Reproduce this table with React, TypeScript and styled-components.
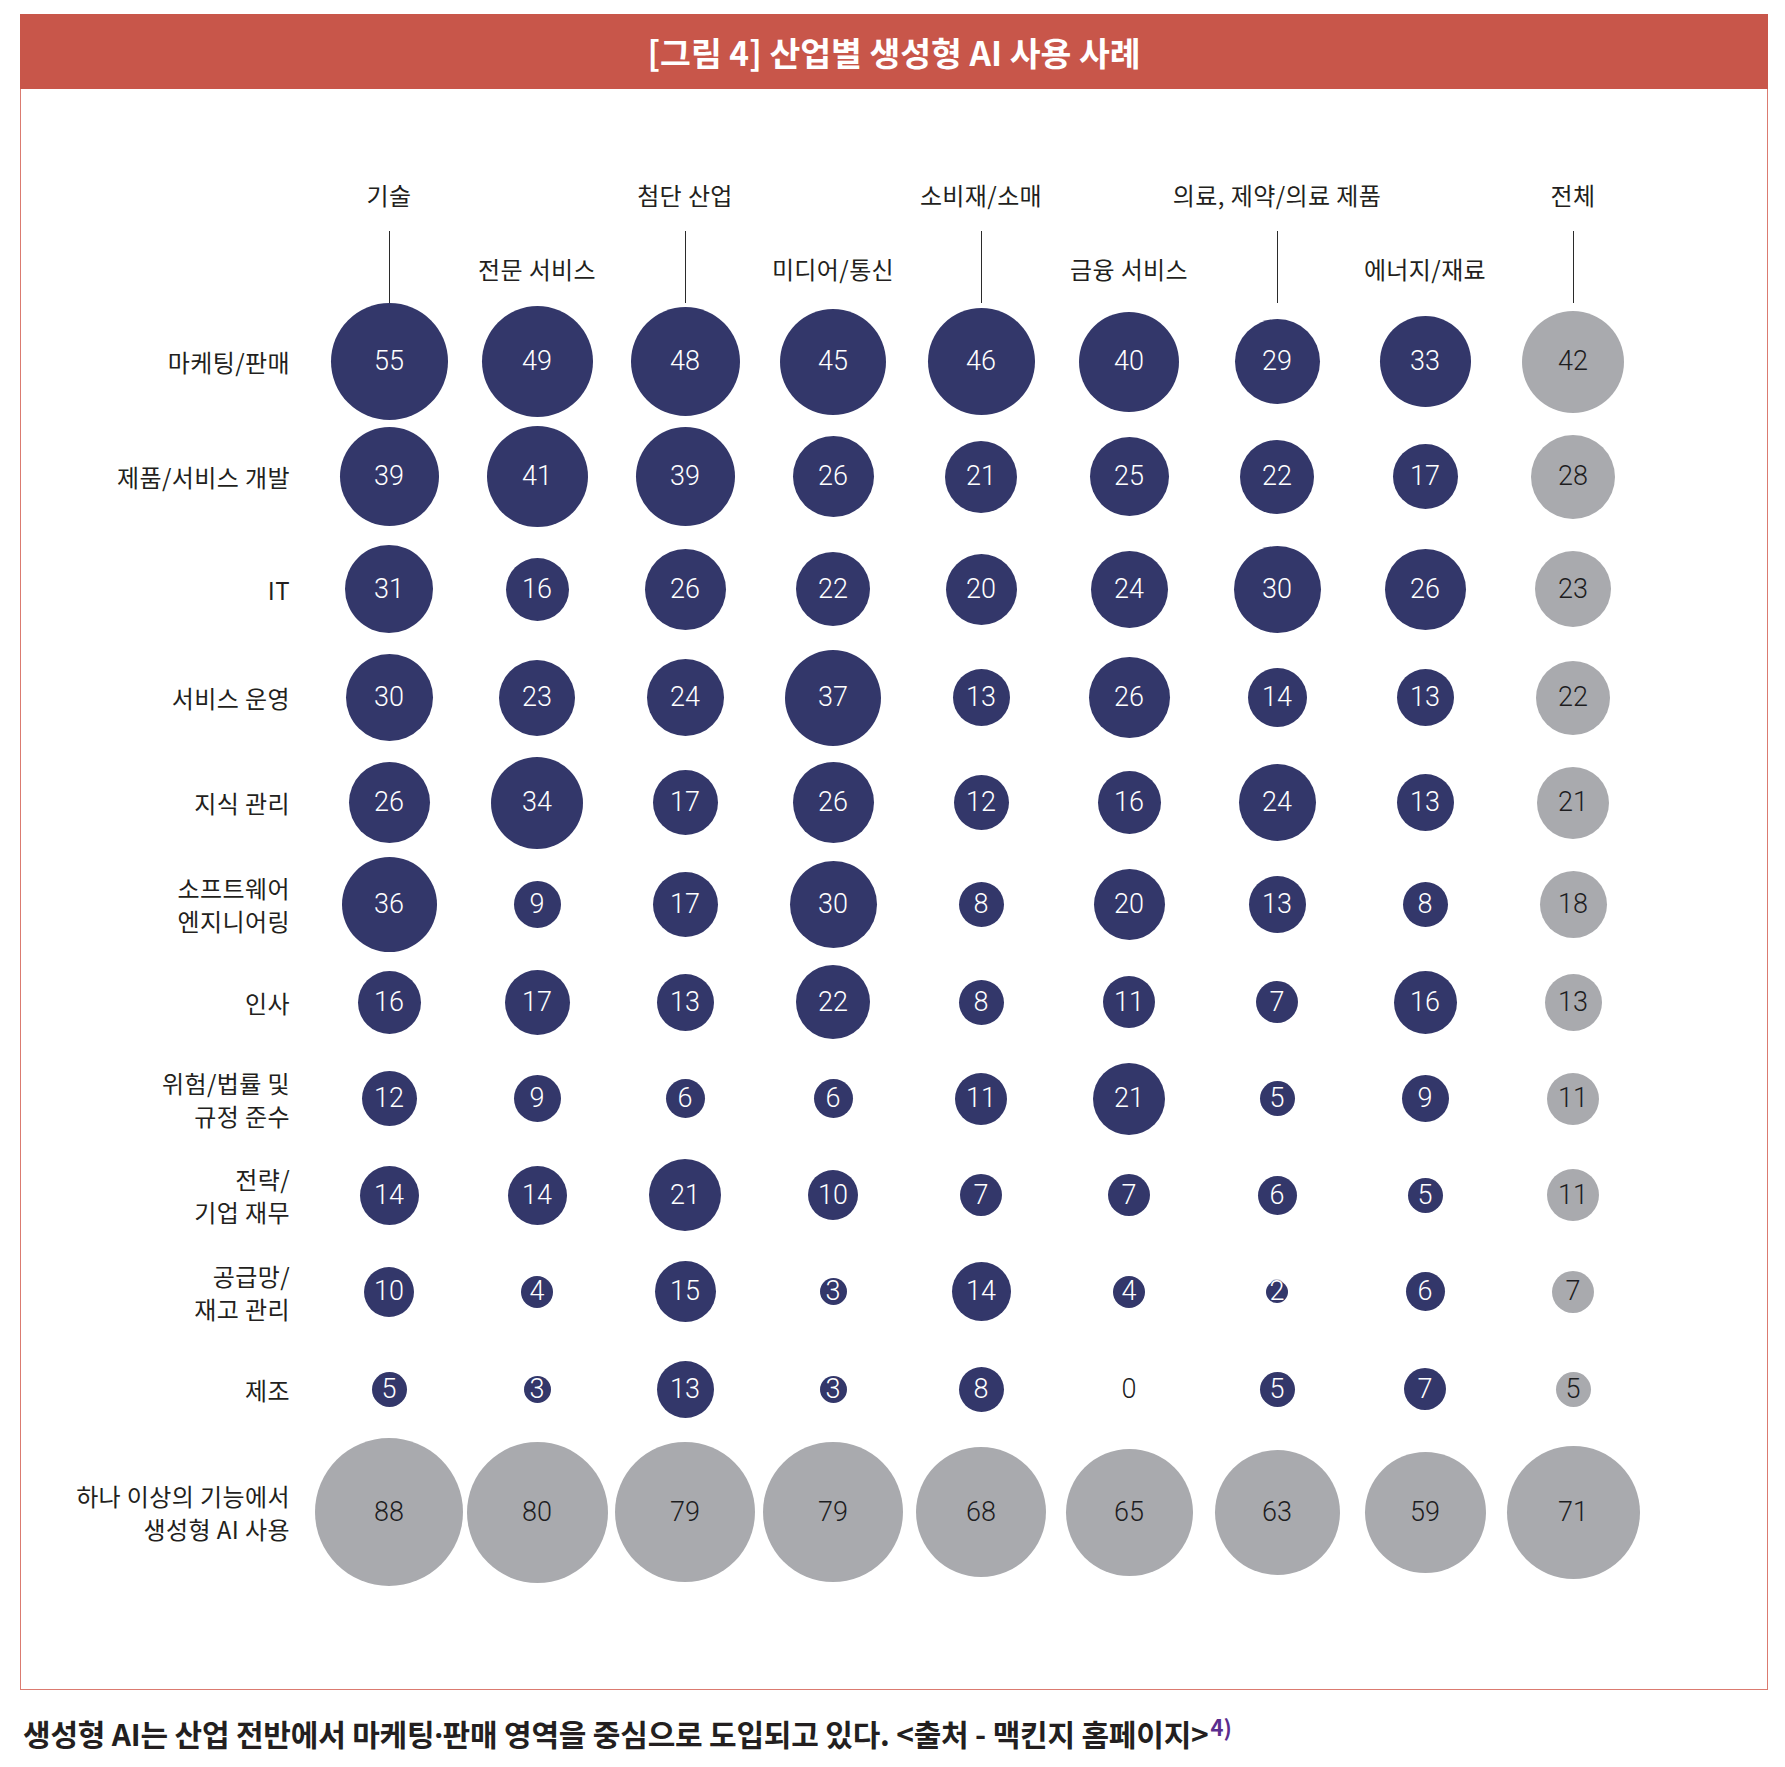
import React from 'react';
import styled, { createGlobalStyle } from 'styled-components';

const NAVY = '#33376a';
const GRAY = '#a9aaae';

const GlobalStyle = createGlobalStyle`
    html, body {
        margin: 0;
        padding: 0;
        background: #ffffff;
    }
    body {
        font-family: "Noto Sans CJK KR", "Noto Sans", sans-serif;
        color: #231f20;
    }
`;

const industries: { name: string; low: boolean }[] = [
    { name: '기술', low: false },
    { name: '전문 서비스', low: true },
    { name: '첨단 산업', low: false },
    { name: '미디어/통신', low: true },
    { name: '소비재/소매', low: false },
    { name: '금융 서비스', low: true },
    { name: '의료, 제약/의료 제품', low: false },
    { name: '에너지/재료', low: true },
    { name: '전체', low: false },
];

const rows: { label: string; values: number[]; height: number; total?: boolean }[] = [
    { label: '마케팅/판매', values: [55, 49, 48, 45, 46, 40, 29, 33, 42], height: 116 },
    { label: '제품/서비스 개발', values: [39, 41, 39, 26, 21, 25, 22, 17, 28], height: 115 },
    { label: 'IT', values: [31, 16, 26, 22, 20, 24, 30, 26, 23], height: 110 },
    { label: '서비스 운영', values: [30, 23, 24, 37, 13, 26, 14, 13, 22], height: 107 },
    { label: '지식 관리', values: [26, 34, 17, 26, 12, 16, 24, 13, 21], height: 103 },
    { label: '소프트웨어\n엔지니어링', values: [36, 9, 17, 30, 8, 20, 13, 8, 18], height: 100 },
    { label: '인사', values: [16, 17, 13, 22, 8, 11, 7, 16, 13], height: 96 },
    { label: '위험/법률 및\n규정 준수', values: [12, 9, 6, 6, 11, 21, 5, 9, 11], height: 97 },
    { label: '전략/\n기업 재무', values: [14, 14, 21, 10, 7, 7, 6, 5, 11], height: 96 },
    { label: '공급망/\n재고 관리', values: [10, 4, 15, 3, 14, 4, 2, 6, 7], height: 97 },
    { label: '제조', values: [5, 3, 13, 3, 8, 0, 5, 7, 5], height: 98 },
    { label: '하나 이상의 기능에서\n생성형 AI 사용', values: [88, 80, 79, 79, 68, 65, 63, 59, 71], height: 143, total: true },
];

/** Bubble diameter grows with the square root of the share. */
const diameter = (v: number) => Math.round(15.8 * Math.sqrt(v));

const App = () => (
    <>
        <GlobalStyle />
        <Page>
            <Figure>
                <TitleBar>[그림 4] 산업별 생성형 AI 사용 사례</TitleBar>
                <Chart>
                    <HeadRow>
                        <div />
                        {industries.map((ind) => (
                            <HeadCell key={ind.name} $low={ind.low}>
                                <HeadLabel>{ind.name}</HeadLabel>
                                {!ind.low && <Stem />}
                            </HeadCell>
                        ))}
                    </HeadRow>
                    {rows.map((row) => (
                        <Row key={row.label} $h={row.height}>
                            <RowLabel>{row.label}</RowLabel>
                            {row.values.map((v, i) => (
                                <Cell key={i}>
                                    {v === 0 ? (
                                        <Bare>0</Bare>
                                    ) : (
                                        <Bubble
                                            $d={diameter(v)}
                                            $gray={row.total || i === industries.length - 1}
                                        >
                                            {v}
                                        </Bubble>
                                    )}
                                </Cell>
                            ))}
                        </Row>
                    ))}
                </Chart>
            </Figure>
            <Caption>
                생성형 AI는 산업 전반에서 마케팅<Dot>·</Dot>판매 영역을 중심으로 도입되고 있다. &lt;출처 - 맥킨지 홈페이지&gt;
                <Note>4)</Note>
            </Caption>
        </Page>
    </>
);

export default App;

const Page = styled.div`
    padding: 14px 17px 0 20px;
`;

const Figure = styled.div`
    width: 1748px;
    box-sizing: border-box;
    border: 1px solid #db7b70;
    border-top: none;
`;

const TitleBar = styled.div`
    height: 75px;
    margin: 0 -1px;
    background: #c8564a;
    color: #ffffff;
    display: flex;
    align-items: center;
    justify-content: center;
    font-size: 33.5px;
    font-weight: 700;
    letter-spacing: 0;
`;

const Chart = styled.div`
    padding-bottom: 108px;
`;

const HeadRow = styled.div`
    display: grid;
    grid-template-columns: 294px repeat(9, 148px);
    height: 214px;
    box-sizing: border-box;
    padding-top: 92px;
`;

const HeadCell = styled.div<{ $low: boolean }>`
    display: flex;
    flex-direction: column;
    align-items: center;
    padding-top: ${(p) => (p.$low ? '74px' : '0')};
`;

const HeadLabel = styled.span`
    font-size: 24px;
    letter-spacing: 0.4px;
    line-height: 28px;
    white-space: nowrap;
`;

const Stem = styled.div`
    width: 1px;
    height: 72px;
    margin-top: 22px;
    background: #2b2b2b;
`;

const Row = styled.div<{ $h: number }>`
    display: grid;
    grid-template-columns: 294px repeat(9, 148px);
    height: ${(p) => p.$h}px;
`;

const RowLabel = styled.div`
    display: flex;
    align-items: center;
    justify-content: flex-end;
    padding-right: 25px;
    text-align: right;
    white-space: pre-line;
    font-size: 24px;
    letter-spacing: 0.4px;
    line-height: 33px;
`;

const Cell = styled.div`
    display: flex;
    align-items: center;
    justify-content: center;
`;

const Bubble = styled.div<{ $d: number; $gray?: boolean }>`
    flex: none;
    width: ${(p) => p.$d}px;
    height: ${(p) => p.$d}px;
    border-radius: 50%;
    background: ${(p) => (p.$gray ? GRAY : NAVY)};
    color: ${(p) => (p.$gray ? '#1d1d1f' : '#ffffff')};
    display: flex;
    align-items: center;
    justify-content: center;
    font-family: Roboto, "Liberation Sans", sans-serif;
    font-weight: 300;
    font-size: 27px;
    line-height: 1;
    text-shadow: ${(p) =>
        !p.$gray && p.$d < 34 ? `0 0 1px ${NAVY}, 0 0 1px ${NAVY}, 0 0 1px ${NAVY}` : 'none'};
`;

const Bare = styled.span`
    font-family: Roboto, "Liberation Sans", sans-serif;
    font-weight: 300;
    font-size: 27px;
    line-height: 1;
    color: #1d1d1f;
`;

const Caption = styled.div`
    margin-top: 25px;
    padding-left: 3px;
    font-size: 30px;
    line-height: 36px;
    font-weight: 700;
    letter-spacing: -0.2px;
    color: #231f20;
    white-space: nowrap;
`;

const Dot = styled.span`
    font-family: "Noto Sans", sans-serif;
`;

const Note = styled.sup`
    font-size: 22px;
    line-height: 0;
    vertical-align: 10px;
    color: #5b2d8e;
    letter-spacing: 0;
    margin-left: 2px;
`;
